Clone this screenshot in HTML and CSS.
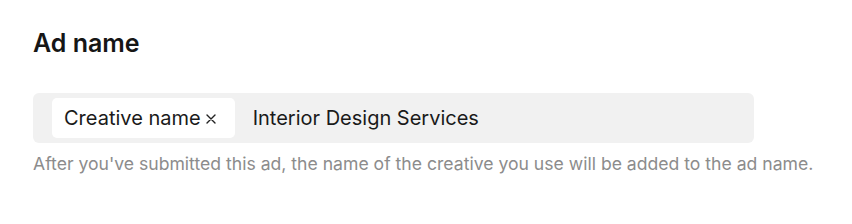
FILE: index.html
```html
<!DOCTYPE html>
<html lang="en">

<head>
    <meta charset="UTF-8">
    <meta name="viewport" content="width=device-width, initial-scale=1.0">
    <title>Ad name</title>
    <link rel="stylesheet" href="styles.css">
</head>

<body>
    <div class="field">
        <h2 class="field-title">Ad name</h2>
        <div class="name-input">
            <span class="chip">Creative name
                <svg class="chip-x" width="10" height="10" viewBox="0 0 10 10">
                    <path d="M1 1 L9 9 M9 1 L1 9" stroke="#222" stroke-width="1.4" stroke-linecap="round" />
                </svg>
            </span>
            <span class="name-text">Interior Design Services</span>
        </div>
        <p class="hint">After you've submitted this ad, the name of the creative you use will be added to the ad name.</p>
    </div>
</body>

</html>
```

FILE: styles.css
```css
* {
    margin: 0;
    padding: 0;
    box-sizing: border-box;
}

body {
    font-family: Inter, "Noto Sans", sans-serif;
    color: #1a1a1a;
    background: #fff;
}

.field {
    padding: 26px 33px;
    width: 787px;
}

.field-title {
    font-size: 25px;
    font-weight: 600;
    line-height: 34px;
    color: #161616;
}

.name-input {
    margin-top: 33px;
    display: flex;
    align-items: center;
    gap: 18px;
    height: 50px;
    padding: 0 19px;
    background: #f1f1f1;
    border-radius: 6px;
}

.chip {
    display: flex;
    align-items: center;
    height: 40px;
    padding: 0 19px 0 12px;
    background: #fff;
    border-radius: 5px;
    font-size: 20px;
}

.chip-x {
    margin-left: 5px;
    margin-top: 2px;
}

.name-text {
    font-size: 20px;
}

.hint {
    margin-top: 9px;
    font-size: 17.6px;
    line-height: 24px;
    color: #8c8c8c;
    white-space: nowrap;
}
```
